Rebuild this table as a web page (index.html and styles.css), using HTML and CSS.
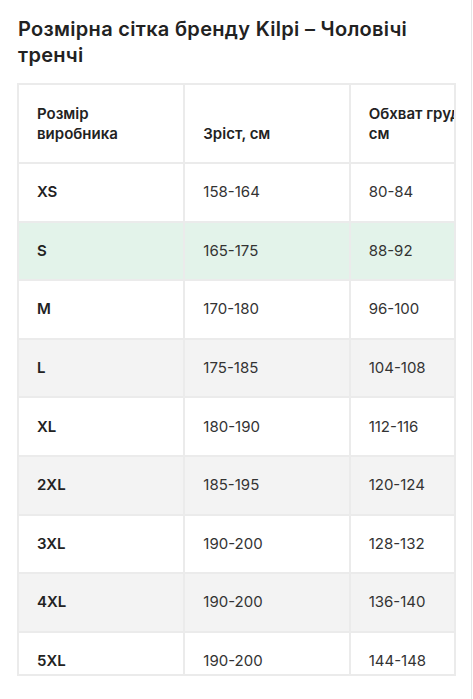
FILE: index.html
```html
<!DOCTYPE html>
<html lang="uk">
<head>
<meta charset="utf-8">
<link rel="stylesheet" href="styles.css">
</head>
<body>
<div class="page">
  <h2 class="title">Розмірна сітка бренду Kilpi – Чоловічі тренчі</h2>
  <div class="table-wrap">
    <table class="sizes">
      <thead>
        <tr>
          <th>Розмір виробника</th>
          <th>Зріст, см</th>
          <th>Обхват грудей, см</th>
        </tr>
      </thead>
      <tbody>
        <tr><td>XS</td><td>158-164</td><td>80-84</td></tr>
        <tr class="active"><td>S</td><td>165-175</td><td>88-92</td></tr>
        <tr><td>M</td><td>170-180</td><td>96-100</td></tr>
        <tr><td>L</td><td>175-185</td><td>104-108</td></tr>
        <tr><td>XL</td><td>180-190</td><td>112-116</td></tr>
        <tr><td>2XL</td><td>185-195</td><td>120-124</td></tr>
        <tr><td>3XL</td><td>190-200</td><td>128-132</td></tr>
        <tr><td>4XL</td><td>190-200</td><td>136-140</td></tr>
        <tr><td>5XL</td><td>190-200</td><td>144-148</td></tr>
      </tbody>
    </table>
  </div>
</div>
</body>
</html>
```
FILE: styles.css
```css
html, body {
  margin: 0;
  padding: 0;
  background: #fff;
}
body {
  font-family: "Inter", "Liberation Sans", sans-serif;
  color: #222;
}
.page {
  width: 472px;
  height: 699px;
  border-right: 1px solid #e6e6e6;
  padding: 16px 0 0 18px;
  box-sizing: border-box;
  overflow: hidden;
}
.title {
  margin: 0 0 15px 0;
  font-size: 20px;
  line-height: 26px;
  font-weight: 600;
  letter-spacing: 0.3px;
  color: #222;
  width: 430px;
}
.table-wrap {
  margin-left: -1px;
  width: 439px;
  height: 593px;
  border: 2px solid #ebebeb;
  box-sizing: border-box;
  overflow: hidden;
}
.sizes {
  border-collapse: collapse;
  border-style: hidden;
  table-layout: fixed;
  width: 496px;
}
.sizes th,
.sizes td {
  border: 2px solid #ebebeb;
  width: 164px;
  box-sizing: border-box;
  text-align: left;
  padding: 18.3px 18px;
  font-size: 15px;
  line-height: 20px;
}
.sizes th {
  vertical-align: bottom;
  font-weight: 600;
  padding-top: 19px;
  padding-bottom: 18px;
  color: #222;
}
.sizes td {
  font-weight: 400;
  color: #333;
}
.sizes td:first-child {
  font-weight: 600;
  color: #222;
}
.sizes tbody tr:nth-child(even) {
  background: #f3f3f3;
}
.sizes tbody tr.active {
  background: #e3f3ea;
}
```
